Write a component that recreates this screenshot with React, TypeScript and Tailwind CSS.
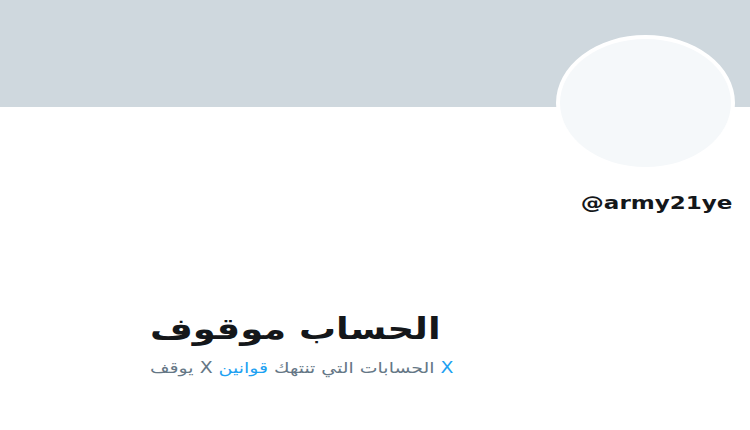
import React from 'react';

// Suspended account profile
const App = () => {
  return (
    <div className="relative w-[750px] h-[430px] bg-white overflow-hidden" style={{ fontFamily: '"DejaVu Sans", sans-serif' }}>
      {/* Banner */}
      <div className="h-[107px] w-full bg-[#cfd8de]" />

      {/* Avatar */}
      <div className="absolute left-[556px] top-[35px] w-[179px] h-[136px] rounded-[50%] bg-[#f5f8fa] border-4 border-white" />

      {/* Handle */}
      <div className="flex justify-end pr-[17px] mt-[87px]">
        <span className="inline-block origin-right scale-x-[1.28] text-[18px] font-bold text-[#14171a] leading-none">@army21ye</span>
      </div>

      {/* Suspended notice */}
      <div className="flex flex-col items-start pl-[150px] mt-[102px]">
        <h1 dir="rtl" className="inline-block origin-left scale-x-[1.23] text-[30px] font-bold text-[#14171a] leading-none">الحساب موقوف</h1>
        <p dir="rtl" className="mt-[17px] inline-block origin-left scale-x-[1.26] text-[15px] text-[#657786] leading-none">
          <span className="text-[#1da1f2]">X</span> الحسابات التي تنتهك <span className="text-[#1da1f2]">قوانين</span> X يوقف
        </p>
      </div>
    </div>
  );
};

export default App;
